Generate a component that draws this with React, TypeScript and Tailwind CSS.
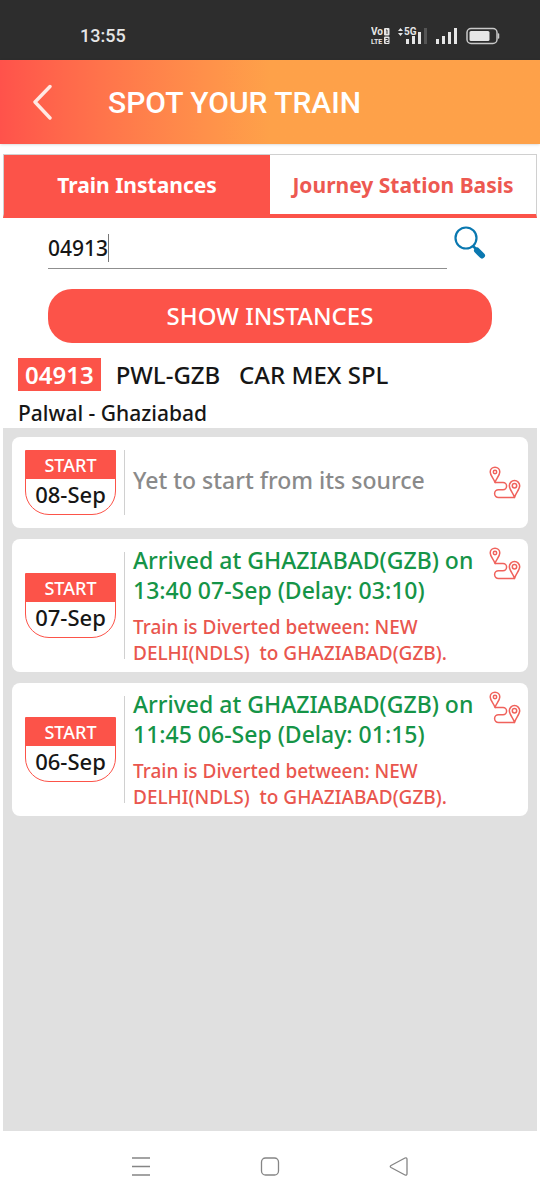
import { useState } from "react";

type Instance = {
  date: string;
  status: string;
  arrived: boolean;
  note?: string;
};

const diverted = "Train is Diverted between: NEW DELHI(NDLS)\u00a0 to GHAZIABAD(GZB).";

const instances: Instance[] = [
  { date: "08-Sep", status: "Yet to start from its source", arrived: false },
  {
    date: "07-Sep",
    status: "Arrived at GHAZIABAD(GZB) on 13:40 07-Sep (Delay: 03:10)",
    arrived: true,
    note: diverted,
  },
  {
    date: "06-Sep",
    status: "Arrived at GHAZIABAD(GZB) on 11:45 06-Sep (Delay: 01:15)",
    arrived: true,
    note: diverted,
  },
];

function StatusBar() {
  return (
    <div className="flex h-15 items-center justify-between bg-[#2d2d2d] pr-10 pl-20 pt-3 font-['Roboto',sans-serif] text-[#e6e6e6]">
      <span className="text-lg leading-6 font-medium">13:55</span>
      <div className="flex items-center gap-2">
        <svg width="19" height="18" viewBox="0 0 19 18" fill="#e6e6e6" role="img" aria-label="VoLTE on SIM 1 and 2">
          <text x="0" y="8" fontSize="10" fontWeight="700">Vo</text>
          <text x="0" y="16.500" fontSize="7" fontWeight="700">LTE</text>
          <rect x="13" y="1" width="5.500" height="7.500" rx="1" />
          <rect x="13" y="9.500" width="5.500" height="7.500" rx="1" />
          <path d="M15 3h1v4M14.500 11.500h2.500v2h-2v2h2.500" fill="none" stroke="#2d2d2d" strokeWidth="0.900" />
        </svg>
        <svg width="30" height="18" viewBox="0 0 30 18" fill="#e6e6e6" aria-hidden="true">
          <path d="M0 4 2.500 1 5 4zM0 6 5 6 2.500 9z" />
          <text x="6" y="8" fontSize="10" fontWeight="700">5G</text>
          <rect x="8" y="12" width="3" height="5" />
          <rect x="14" y="9" width="3" height="8" />
          <rect x="20" y="5" width="3" height="12" />
          <rect x="26" y="1" width="3" height="16" fill="#555" />
        </svg>
        <svg width="22" height="18" viewBox="0 0 22 18" fill="#e6e6e6" aria-hidden="true">
          <rect x="0" y="12" width="3" height="5" />
          <rect x="6" y="9" width="3" height="8" />
          <rect x="12" y="5" width="3" height="12" />
          <rect x="18" y="1" width="3" height="16" />
        </svg>
        <svg width="34" height="18" viewBox="0 0 34 18" aria-hidden="true">
          <rect x="1" y="1.500" width="30" height="15" rx="4" fill="none" stroke="#c9c9c9" strokeWidth="1.500" />
          <rect x="3.500" y="4" width="20" height="10" rx="1.500" fill="#e6e6e6" />
          <path d="M32.500 7v4" stroke="#c9c9c9" strokeWidth="1.500" strokeLinecap="round" />
        </svg>
      </div>
    </div>
  );
}

function SearchIcon() {
  return (
    <svg width="34" height="36" viewBox="0 0 34 36" fill="none" aria-hidden="true">
      <circle cx="13" cy="13" r="10.500" stroke="#0a78b0" strokeWidth="2.200" />
      <path d="M20 21l3.500 3.500" stroke="#0a78b0" strokeWidth="2.500" />
      <path d="M24 25.500l5 5" stroke="#0a78b0" strokeWidth="6" strokeLinecap="round" />
    </svg>
  );
}

function RouteIcon() {
  return (
    <svg width="32" height="33" viewBox="0 0 32 33" fill="none" stroke="#f0625c" strokeWidth="1.500" strokeLinejoin="round" aria-hidden="true">
      <path d="M6 16.500C5.200 13 1.200 9.500 1.200 6a4.800 4.800 0 0 1 9.600 0C10.800 9.500 6.800 13 6 16.500z" />
      <circle cx="6" cy="6" r="1.700" />
      <path d="M25.500 31.500C24.500 27.500 20.300 23.500 20.300 19.800a5.200 5.200 0 0 1 10.400 0C30.700 23.500 26.500 27.500 25.500 31.500z" />
      <circle cx="25.500" cy="19.800" r="2.200" />
      <path d="M6 16.500H14a3.600 3.600 0 0 1 0 7.200H9.500a3.900 3.900 0 0 0 0 7.800H25.500" />
    </svg>
  );
}

function InstanceCard({ item }: { item: Instance }) {
  return (
    <li className="flex rounded-lg bg-white py-3 pr-[7px] pl-3">
      <div className="my-px flex w-[101px] shrink-0 items-center border-r border-[#d0d0d0]">
        <div className="ml-px w-[91px] overflow-hidden rounded-b-3xl border border-[#fc5349] text-center">
          <div className="bg-[#fc5349] text-lg leading-7 font-medium text-white">START</div>
          <div className="pb-1 text-[22px] leading-[31px] font-medium text-[#161616]">{item.date}</div>
        </div>
      </div>
      <div className="-mt-[6px] flex min-w-0 flex-1 flex-col justify-center pl-2">
        <p className={item.arrived ? "text-[23px] leading-[30px] font-medium text-[#159447]" : "text-[23px] leading-[30px] font-medium text-[#8a8a8a]"}>
          {item.status}
        </p>
        {item.note && (
          <p className="mt-[9px] -mb-[6px] text-[19px] leading-[26px] font-medium text-[#e9564e]">{item.note}</p>
        )}
      </div>
      <button
        type="button"
        aria-label={"Show route for " + item.date}
        className={item.arrived ? "-mt-1 self-start" : "self-center"}
      >
        <RouteIcon />
      </button>
    </li>
  );
}

export default function App() {
  const [train, setTrain] = useState("04913");
  return (
    <div className="flex min-h-screen flex-col bg-white font-['Noto_Sans',sans-serif]">
      <StatusBar />
      <header className="flex h-21 items-center bg-linear-to-r from-[#ff524b] to-[#fea149] to-50% pl-8 shadow-sm">
        <button type="button" aria-label="Back" className="w-19">
          <svg width="20" height="36" viewBox="0 0 20 36" fill="none" stroke="#ffe9e4" strokeWidth="3.400" strokeLinecap="round" strokeLinejoin="round" aria-hidden="true">
            <path d="M18 2.500 3 18 18 34" />
          </svg>
        </button>
        <h1 className="pt-0.5 font-['Roboto',sans-serif] text-3xl leading-9 font-medium text-white">SPOT YOUR TRAIN</h1>
      </header>

      <main className="flex flex-1 flex-col px-[3px] pt-[10px]">
        <div role="tablist" className="grid h-16 grid-cols-2 border border-b-4 border-[#d0d0d0] border-b-[#fc5349] text-[21px] font-bold">
          <button type="button" role="tab" aria-selected="true" className="bg-[#fc5349] pt-0.5 text-white">
            Train Instances
          </button>
          <button type="button" role="tab" aria-selected="false" className="pt-0.5 text-[#ed5951]">
            Journey Station Basis
          </button>
        </div>

        <form className="px-[45px] pt-[5px]" onSubmit={(e) => e.preventDefault()}>
          <div className="flex items-start">
            <div className="relative min-w-0 flex-1 border-b border-[#8f8f8f] pt-[6px] pb-[2px]">
              <input
                type="text"
                aria-label="Train number"
                value={train}
                onChange={(e) => setTrain(e.target.value)}
                className="block h-[37px] w-full text-[21px] font-medium text-[#161616] outline-none"
              />
              <span className="absolute top-[11px] left-15 h-7 w-px bg-[#777]" />
            </div>
            <button type="submit" aria-label="Search" className="w-[45px] pt-0.5 pl-1.5">
              <SearchIcon />
            </button>
          </div>
          <button type="submit" className="mt-5 h-[54px] w-full rounded-3xl bg-[#fc5349] text-2xl font-medium text-white">
            SHOW INSTANCES
          </button>
        </form>

        <section className="px-[15px] pt-[15px]">
          <h2 className="flex items-center gap-[15px] text-2xl leading-[33px] font-medium text-[#161616]">
            <span className="bg-[#fc5349] px-[7px] font-semibold text-white">04913</span>
            <span>PWL-GZB&nbsp;&nbsp; CAR MEX SPL</span>
          </h2>
          <p className="mt-2 text-[21px] leading-[29px] font-medium text-[#161616]">Palwal - Ghaziabad</p>
        </section>

        <ul className="flex flex-1 flex-col gap-[11px] bg-[#e0e0e0] p-[9px]">
          {instances.map((item) => (
            <InstanceCard key={item.date} item={item} />
          ))}
        </ul>
      </main>

      <nav className="flex h-[69px] items-center justify-between px-32 text-[#858585]">
        <button type="button" aria-label="Recent apps">
          <svg width="26" height="24" viewBox="0 0 26 24" fill="none" stroke="currentColor" strokeWidth="1.500" aria-hidden="true">
            <path d="M4 4h18M4 12.500h18M4 21h18" />
          </svg>
        </button>
        <button type="button" aria-label="Home">
          <svg width="26" height="24" viewBox="0 0 26 24" fill="none" stroke="currentColor" strokeWidth="1.300" aria-hidden="true">
            <rect x="4.500" y="4" width="17" height="17" rx="4" />
          </svg>
        </button>
        <button type="button" aria-label="Back to previous screen">
          <svg width="26" height="24" viewBox="0 0 26 24" fill="none" stroke="currentColor" strokeWidth="1.300" strokeLinejoin="round" aria-hidden="true">
            <path d="M5 11.500 19 4q2-.7 2 1.500v14q0 2.200-2 1.500L5 13.500q-1.500-1 0-2z" />
          </svg>
        </button>
      </nav>
    </div>
  );
}
